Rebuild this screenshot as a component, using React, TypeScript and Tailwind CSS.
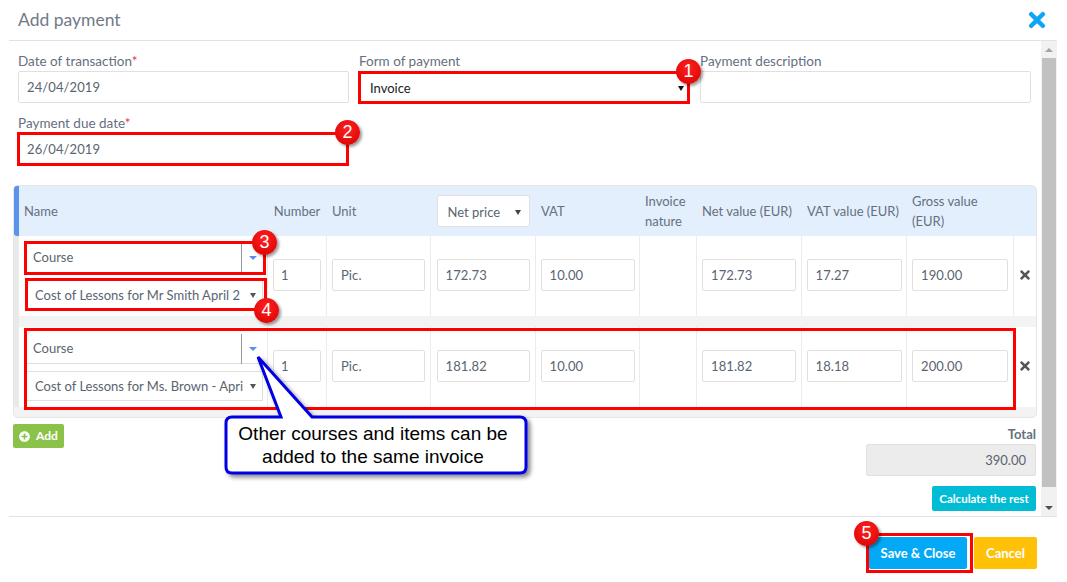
import React from "react";
import { FaTimes, FaPlusCircle } from "react-icons/fa";

const font = "font-['Lato','Noto_Sans',sans-serif]";
const inputCls = "h-[32px] border border-[#e0e0e0] rounded-[2px] bg-white flex items-center pt-[1px] text-[13px] text-[#5a6470] tracking-[0.1px]";

function Tri({ cls = "border-x-[3px] border-t-[5px] border-t-[#333]" }: { cls?: string }) {
  return <span className={`inline-block shrink-0 w-0 h-0 border-x-transparent ${cls}`} />;
}

function Field({ label, req, value, children }: { label: string; req?: boolean; value?: string; children?: React.ReactNode }) {
  return (
    <div>
      <div className="h-[19px] leading-[19px] text-[13.5px] text-[#667080] whitespace-nowrap">
        {label}
        {req && <span className="text-[#e53935]">*</span>}
      </div>
      {children ?? <div className={`${inputCls} pl-[8px]`}>{value}</div>}
    </div>
  );
}

const grid = "grid grid-cols-[249px_59px_104px_105px_104px_57px_105px_105px_107px_22px]";
const cell = "border-r border-[#ececec] flex items-center justify-center pb-[2px]";

function Row({ name, vals }: { name: string; vals: string[] }) {
  return (
    <div className={`${grid} h-[80px] bg-white`}>
      <div className="border-r border-[#ececec] pl-[7px] pr-[4px] pt-[7px] flex flex-col gap-[7px]">
        <div className="h-[30px] bg-white border-b border-[#ddd] flex items-center">
          <span className="flex-1 pl-[7px] text-[13px] text-[#5a6470]">Course</span>
          <span className="w-[22px] h-[30px] border-l border-[#999] flex items-center justify-center">
            <Tri cls="border-x-[4px] border-t-[4px] border-t-[#5b8def]" />
          </span>
        </div>
        <div className="h-[30px] bg-white border border-[#e0e0e0] flex items-center justify-between pt-[1px] pl-[8px] pr-[6px]">
          <span className="whitespace-nowrap text-[13px] text-[#5a6470]">{name}</span>
          <Tri cls="border-x-[3px] border-t-[5px] border-t-[#555]" />
        </div>
      </div>
      <div className={cell}><div className={`${inputCls} w-[48px] pl-[7px]`}>{vals[0]}</div></div>
      <div className={cell}><div className={`${inputCls} w-[93px] pl-[8px]`}>Pic.</div></div>
      <div className={cell}><div className={`${inputCls} w-[93px] pl-[8px]`}>{vals[1]}</div></div>
      <div className={cell}><div className={`${inputCls} w-[94px] pl-[8px]`}>{vals[2]}</div></div>
      <div className={cell} />
      <div className={cell}><div className={`${inputCls} w-[94px] pl-[8px]`}>{vals[1]}</div></div>
      <div className={cell}><div className={`${inputCls} w-[95px] pl-[8px]`}>{vals[3]}</div></div>
      <div className={cell}><div className={`${inputCls} w-[96px] pl-[8px]`}>{vals[4]}</div></div>
      <div className="flex items-center justify-center pb-[2px] text-[#555] text-[14px]"><FaTimes /></div>
    </div>
  );
}

function Red({ cls }: { cls: string }) {
  return <div className={`absolute border-[3px] border-[#ff0000] pointer-events-none ${cls}`} />;
}

function Badge({ n, cls }: { n: number; cls: string }) {
  return (
    <div className={`absolute w-[25px] h-[25px] rounded-full bg-[radial-gradient(circle_at_50%_35%,#ff2020,#d80000)] text-white text-[18px] font-['Liberation_Sans',sans-serif] flex items-center justify-center shadow-[2px_2px_3px_rgba(0,0,0,0.4)] ${cls}`}>
      {n}
    </div>
  );
}

export default function App() {
  const h = "border-r border-[#e8eef7] flex items-center text-[13px] text-[#667080] leading-[20px]";
  return (
    <div className={`relative w-[1067px] h-[582px] overflow-hidden bg-white flex flex-col ${font}`}>
      <header className="h-[41px] shrink-0 ml-[9px] mr-[10px] border-b border-[#e2e2e2] flex items-center justify-between pl-[9px] pr-[8px]">
        <span className="text-[17.5px] text-[#707a86]">Add payment</span>
        <FaTimes className="text-[#0ea5f5] text-[24px]" />
      </header>

      <div className="h-[475px] shrink-0 ml-[9px] mr-[10px] flex">
        <main className="flex-1 min-w-0">
          <div className="pl-[9px] pt-[11px] grid grid-cols-[331px_331px_331px] gap-x-[10px]">
            <Field label="Date of transaction" req value="24/04/2019" />
            <Field label="Form of payment">
              <div className="h-[32px] bg-white flex items-center justify-between pt-[3px] pl-[11px] pr-[6px] text-[13px] text-[#222]">
                Invoice
                <span className="-mt-[4px]"><Tri cls="block border-x-[3px] border-t-[5px] border-t-[#111]" /></span>
              </div>
            </Field>
            <Field label="Payment description" value="" />
            <div className="mt-[11px]">
              <Field label="Payment due date" req value="26/04/2019" />
            </div>
          </div>

          <div className="ml-[4px] mt-[20px] w-[1024px] h-[233px] rounded-[5px] bg-[#f3f3f3] border border-[#e6e6e6]">
            <div className="flex h-[50px]">
              <div className="w-[5px] shrink-0 bg-[#5b93e8] rounded-l-[3px]" />
              <div className={`${grid} flex-1 bg-[#e3effd] rounded-tr-[4px]`}>
                <div className={`${h} pl-[5px]`}>Name</div>
                <div className={`${h} justify-center`}>Number</div>
                <div className={`${h} pl-[5px]`}>Unit</div>
                <div className={`${h} justify-center`}>
                  <div className="w-[93px] h-[32px] bg-white border border-[#e0e0e0] rounded-[2px] flex items-center justify-between pt-[2px] pl-[10px] pr-[8px] text-[#5a6470]">
                    Net price
                    <Tri cls="border-x-[3px] border-t-[5px] border-t-[#444]" />
                  </div>
                </div>
                <div className={`${h} pl-[5px]`}>VAT</div>
                <div className={`${h} pl-[5px]`}>Invoice<br />nature</div>
                <div className={`${h} pl-[5px] whitespace-nowrap`}>Net value (EUR)</div>
                <div className={`${h} pl-[5px] whitespace-nowrap`}>VAT value (EUR)</div>
                <div className={`${h} pl-[5px]`}>Gross value<br />(EUR)</div>
                <div />
              </div>
            </div>
            <div className="border-l-[5px] border-l-[#e9e9e9] flex flex-col gap-[11px]">
              <Row name="Cost of Lessons for Mr Smith April 2" vals={["1", "172.73", "10.00", "17.27", "190.00"]} />
              <Row name="Cost of Lessons for Ms. Brown - Apri" vals={["1", "181.82", "10.00", "18.18", "200.00"]} />
            </div>
          </div>

          <div className="pl-[4px] pt-[6px] w-[1027px] flex justify-between items-start">
            <button className="w-[51px] h-[24px] rounded-[2px] bg-[#8bc34a] text-white text-[12px] font-bold flex items-center justify-center gap-[6px]">
              <FaPlusCircle className="text-[11px]" /> Add
            </button>
            <div className="flex flex-col items-end">
              <div className="h-[20px] leading-[20px] text-[13px] font-bold text-[#667080]">Total</div>
              <div className="w-[170px] h-[32px] bg-[#ececec] border border-[#e0e0e0] rounded-[2px] flex items-center justify-end pt-[1px] pr-[9px] text-[13px] text-[#5a6470]">390.00</div>
              <button className="mt-[10px] w-[104px] h-[25px] rounded-[2px] bg-[#00bcd4] text-white text-[11.5px] font-bold whitespace-nowrap">Calculate the rest</button>
            </div>
          </div>
        </main>

        <div className="w-[16px] bg-[#f1f1f1] flex flex-col items-center">
          <div className="h-[17px] flex items-center justify-center">
            <span className="w-0 h-0 border-x-[4px] border-x-transparent border-b-[4px] border-b-[#a3a3a3]" />
          </div>
          <div className="w-[14px] flex-1 bg-[#c1c1c1]" />
          <div className="h-[29px] pb-[6px] flex items-end justify-center">
            <span className="w-0 h-0 border-x-[4px] border-x-transparent border-t-[4px] border-t-[#505050]" />
          </div>
        </div>
      </div>

      <footer className="flex-1 ml-[9px] mr-[10px] border-t border-[#e2e2e2] flex justify-end items-start gap-[7px] pt-[20px] pr-[20px]">
        <button className="w-[98px] h-[32px] pt-[1px] rounded-[2px] bg-[#03a9f4] text-white text-[13px] font-bold">Save &amp; Close</button>
        <button className="w-[63px] h-[32px] pt-[1px] rounded-[2px] bg-[#ffc107] text-white text-[13px] font-bold">Cancel</button>
      </footer>

      <Red cls="left-[358px] top-[71px] w-[332px] h-[33px]" />
      <Red cls="left-[17px] top-[132px] w-[332px] h-[34px]" />
      <Red cls="left-[24px] top-[241px] w-[242px] h-[34px]" />
      <Red cls="left-[25px] top-[278px] w-[242px] h-[33px]" />
      <Red cls="left-[24px] top-[328px] w-[992px] h-[82px]" />
      <Red cls="left-[866px] top-[533px] w-[107px] h-[40px]" />

      <Badge n={1} cls="left-[676px] top-[59px]" />
      <Badge n={2} cls="left-[335px] top-[120px]" />
      <Badge n={3} cls="left-[252px] top-[230px]" />
      <Badge n={4} cls="left-[254px] top-[298px]" />
      <Badge n={5} cls="left-[854px] top-[521px]" />

      <svg className="absolute left-[220px] top-[350px]" width="320" height="135" viewBox="220 350 320 135">
        <defs>
          <filter id="s" x="-10%" y="-10%" width="120%" height="120%">
            <feDropShadow dx="3" dy="3" stdDeviation="2" floodColor="#000" floodOpacity="0.45" />
          </filter>
        </defs>
        <path
          d="M232 417 H281 L258 357 L312 417 H520 Q526 417 526 423 V467 Q526 473 520 473 H232 Q226 473 226 467 V423 Q226 417 232 417 Z"
          fill="#fff"
          stroke="#0000e0"
          strokeWidth="3"
          filter="url(#s)"
        />
      </svg>
      <div className="absolute left-[223px] top-[422px] w-[300px] text-center font-['Liberation_Sans',sans-serif] text-[19px] leading-[23px] text-black">
        Other courses and items can be<br />added to the same invoice
      </div>
    </div>
  );
}
